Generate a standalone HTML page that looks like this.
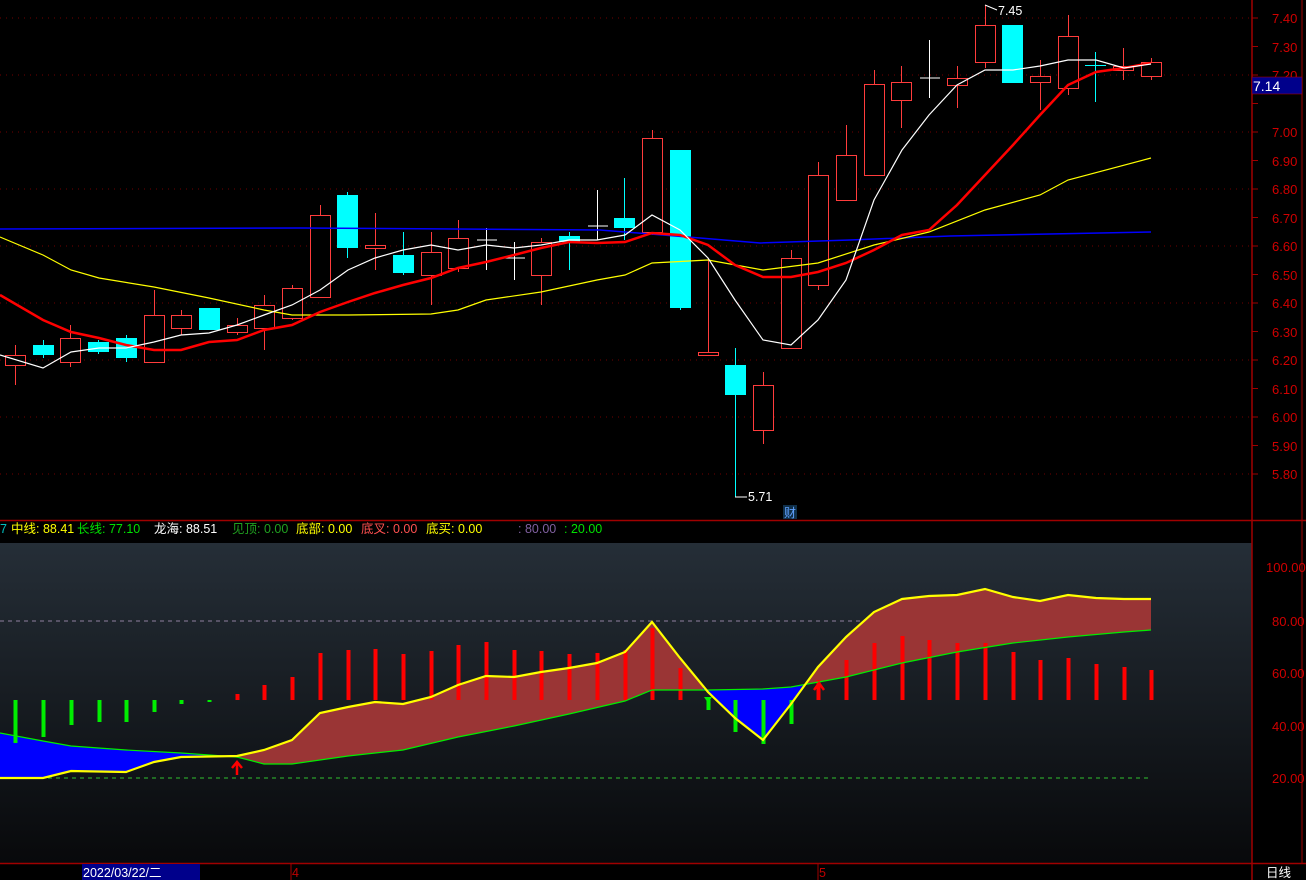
<!DOCTYPE html>
<html><head><meta charset="utf-8"><style>
body{margin:0;background:#000;width:1306px;height:880px;overflow:hidden;font-family:"Liberation Sans","Noto Sans CJK SC",sans-serif}
svg{position:absolute;left:0;top:0}
text{font-family:"Liberation Sans","Noto Sans CJK SC",sans-serif}
</style></head><body>
<svg id="s" width="1306" height="880" xmlns="http://www.w3.org/2000/svg">
<defs>
<linearGradient id="g" x1="0" y1="0" x2="0" y2="1"><stop offset="0" stop-color="#252e37"/><stop offset="1" stop-color="#08090b"/></linearGradient>
<clipPath id="cr"><rect x="215" y="540" width="488" height="330"/><rect x="804" y="540" width="400" height="330"/></clipPath>
<clipPath id="cb"><rect x="0" y="540" width="215" height="330"/><rect x="703" y="540" width="101" height="330"/></clipPath>
</defs>
<rect x="0" y="543" width="1252" height="320" fill="url(#g)"/>
<g id="grid"></g>
<g id="main"></g>
<line x1="1252" y1="0" x2="1252" y2="880" stroke="#a00000" stroke-width="1.5"/>
<line x1="0" y1="520.5" x2="1306" y2="520.5" stroke="#a00000" stroke-width="1.5"/>
<line x1="0" y1="863.5" x2="1306" y2="863.5" stroke="#a00000" stroke-width="1.5"/>
<line x1="1302" y1="0" x2="1302" y2="863" stroke="#a00000" stroke-width="1"/>
<g fill="#d00000" font-size="13">
<text x="1272" y="23">7.40</text><text x="1272" y="52">7.30</text><text x="1272" y="80">7.20</text>
<text x="1272" y="137">7.00</text><text x="1272" y="166">6.90</text><text x="1272" y="194">6.80</text>
<text x="1272" y="223">6.70</text><text x="1272" y="251">6.60</text><text x="1272" y="280">6.50</text>
<text x="1272" y="308">6.40</text><text x="1272" y="337">6.30</text><text x="1272" y="365">6.20</text>
<text x="1272" y="394">6.10</text><text x="1272" y="422">6.00</text><text x="1272" y="451">5.90</text>
<text x="1272" y="479">5.80</text>
<text x="1266" y="572">100.00</text><text x="1272" y="626">80.00</text><text x="1272" y="678">60.00</text>
<text x="1272" y="731">40.00</text><text x="1272" y="783">20.00</text>
</g>
<rect x="1252" y="77" width="50" height="17" fill="#00008b" stroke="#c00000" stroke-width="0.5"/>
<text x="1253" y="91" fill="#fff" font-size="14">7.14</text>
<g font-size="12.5">
<text x="0" y="533" fill="#00c0c0">7</text>
<text x="11" y="533" fill="#ffff00">中线: 88.41</text>
<text x="77" y="533" fill="#00e000">长线: 77.10</text>
<text x="154" y="533" fill="#ffffff">龙海: 88.51</text>
<text x="232" y="533" fill="#20a020">见顶: 0.00</text>
<text x="296" y="533" fill="#ffff00">底部: 0.00</text>
<text x="361" y="533" fill="#ff5050">底叉: 0.00</text>
<text x="426" y="533" fill="#ffff00">底买: 0.00</text>
<text x="518" y="533" fill="#8060a0">: 80.00</text>
<text x="564" y="533" fill="#00e000">: 20.00</text>
</g>
<text x="998" y="15" fill="#fff" font-size="12.5">7.45</text>
<path d="M985 5 L997 10" stroke="#fff" fill="none"/>
<text x="748" y="501" fill="#fff" font-size="12.5">5.71</text>
<path d="M735 497 L747 497" stroke="#fff"/>
<rect x="783" y="505" width="14" height="14" fill="#10304a"/>
<text x="784" y="517" fill="#60a0ff" font-size="12">财</text>
<rect x="82" y="864" width="118" height="16" fill="#00008b"/>
<text x="83" y="877" fill="#fff" font-size="12.5">2022/03/22/二</text>
<text x="292" y="877" fill="#c00000" font-size="12.5">4</text>
<line x1="291" y1="864" x2="291" y2="880" stroke="#a00000"/>
<text x="819" y="877" fill="#c00000" font-size="12.5">5</text>
<line x1="818" y1="864" x2="818" y2="880" stroke="#a00000"/>
<text x="1266" y="877" fill="#fff" font-size="12.5">日线</text>
</svg>
<script>
var S=document.getElementById('main'),G=document.getElementById('grid'),h='',gh='';
for(var p=0;p<=8;p++){var y=18+p*57;gh+='<line x1="0" y1="'+y+'" x2="1252" y2="'+y+'" stroke="#700000" stroke-dasharray="1,5"/>';}
for(var p=0;p<=16;p++){var y=18+p*28.5;gh+='<line x1="1252" y1="'+y+'" x2="1258" y2="'+y+'" stroke="#a00000"/>';}
gh+='<line x1="0" y1="621" x2="1150" y2="621" stroke="#9080a0" stroke-dasharray="4,4"/>';
gh+='<line x1="0" y1="778" x2="1150" y2="778" stroke="#30c030" stroke-dasharray="4,4"/>';
G.innerHTML=gh;
var xs=[];for(var i=0;i<42;i++)xs.push(Math.round(15+i*27.7));
// type,top,bottom,wickTop,wickBot
var c=[['r',355,365,345,385],['c',345,355,340,358],['r',338,362,325,367],['c',342,352,340,354],['c',338,358,335,362],['r',315,362,290,362],['r',315,328,310,335],['c',308,330,308,330],['r',325,332,318,335],['r',305,328,295,350],['r',288,318,285,320],['r',215,297,205,298],['c',195,248,192,258],['r',245,248,213,270],['c',255,273,232,275],['r',252,275,232,305],['r',238,268,220,272],['w',240,241,228,270],['w',258,259,242,280],['r',242,275,238,305],['c',236,242,232,270],['w',226,227,190,240],['c',218,228,178,240],['r',138,232,130,235],['c',150,308,150,310],['r',352,355,258,355],['c',365,395,348,497],['r',385,430,372,444],['r',258,348,250,348],['r',175,285,162,290],['r',155,200,125,200],['r',84,175,70,175],['r',82,100,66,128],['w',78,79,40,98],['r',78,85,66,108],['r',25,62,5,68],['c',25,83,25,83],['r',76,82,60,110],['r',36,88,15,95],['c',65,66,52,102],['r',66,70,48,80],['r',62,76,58,80]];
c.forEach(function(k,i){var x=xs[i],col=k[0]=='r'?'#ff3c3c':k[0]=='c'?'#00ffff':'#ffffff';
h+='<line x1="'+(x+.5)+'" y1="'+k[3]+'" x2="'+(x+.5)+'" y2="'+k[4]+'" stroke="'+col+'"/>';
if(k[0]=='r')h+='<rect x="'+(x-9.5)+'" y="'+(k[1]+.5)+'" width="20" height="'+(k[2]-k[1])+'" fill="#000" stroke="'+col+'"/>';
else if(k[0]=='c')h+='<rect x="'+(x-10)+'" y="'+k[1]+'" width="21" height="'+(k[2]-k[1])+'" fill="'+col+'"/>';
else h+='<line x1="'+(x-9)+'" y1="'+k[1]+'" x2="'+(x+11)+'" y2="'+k[1]+'" stroke="'+col+'"/>';});
function pl(a,col,w){var s='';for(var i=0;i<a.length;i+=2)s+=a[i]+','+a[i+1]+' ';return '<polyline points="'+s+'" fill="none" stroke="'+col+'" stroke-width="'+w+'"/>';}
h+=pl([0,229,300,228,600,230,700,238,760,243,850,240,950,236,1050,234,1151,232],'#0000ff',1.5);
h+=pl([0,237,43,255,71,270,99,278,154,287,209,298,264,310,292,315,348,315,431,314,458,310,486,300,541,292,597,280,625,275,652,263,708,260,763,270,818,263,874,245,929,232,985,210,1040,195,1068,180,1151,158],'#ffff00',1.2);
h+=pl([0,295,43,320,71,332,99,338,126,345,154,350,181,350,209,342,237,340,264,330,292,325,320,312,348,302,375,293,403,285,431,278,458,268,486,262,514,255,541,248,569,242,597,243,625,242,652,233,680,235,708,245,735,265,763,277,791,277,818,272,846,263,874,250,902,235,929,230,957,205,985,175,1013,145,1040,115,1068,85,1096,72,1124,68,1151,63],'#ff0000',2.5);
h+=pl([0,355,43,368,71,352,99,348,126,348,154,342,181,335,209,333,237,325,264,315,292,305,320,290,348,270,375,258,403,250,431,245,458,250,486,245,514,248,541,245,569,240,597,240,625,235,652,215,680,230,708,258,735,300,763,340,791,345,818,320,846,280,874,200,902,150,929,115,957,85,985,70,1013,70,1040,66,1068,60,1096,60,1124,68,1151,64],'#ffffff',1.2);
var Y=[0,778,43,778,71,771,126,772,154,762,181,757,237,756,264,750,292,740,320,713,348,707,375,702,403,704,431,697,458,685,486,676,514,677,541,672,569,668,597,663,625,652,652,622,680,658,708,692,735,718,763,740,791,704,818,667,846,637,874,612,902,599,929,596,957,595,985,589,1013,597,1040,601,1068,595,1096,598,1124,599,1151,599];
var Gr=[0,733,43,741,71,746,126,750,181,753,237,757,264,764,292,764,348,756,403,750,458,737,514,726,569,714,625,701,652,690,708,690,763,689,791,687,846,677,902,663,957,652,1013,643,1068,637,1124,632,1151,630];
var poly='';for(var i=0;i<Y.length;i+=2)poly+=Y[i]+','+Y[i+1]+' ';for(var i=Gr.length-2;i>=0;i-=2)poly+=Gr[i]+','+Gr[i+1]+' ';
h+='<polygon points="'+poly+'" fill="#9a3535" clip-path="url(#cr)"/><polygon points="'+poly+'" fill="#0000ff" clip-path="url(#cb)"/>';
var bars={15:743,43:737,71:725,99:722,126:722,154:712,181:704,209:702,237:694,264:685,292:677,320:653,348:650,375:649,403:654,431:651,458:645,486:642,514:650,541:651,569:654,597:653,625:650,652:628,680:668,708:710,735:732,763:744,791:724,818:680,846:660,874:643,902:636,929:640,957:643,985:643,1013:652,1040:660,1068:658,1096:664,1124:667,1151:670};
for(var k in bars){var y=bars[k],x=+k;if(y>700)h+='<rect x="'+(x-1.5)+'" y="700" width="4" height="'+(y-700)+'" fill="#00ee00"/>';else h+='<rect x="'+(x-1.5)+'" y="'+y+'" width="4" height="'+(700-y)+'" fill="#ff0000"/>';}
h+=pl(Gr,'#00ee00',1.2)+pl(Y,'#ffff00',2.2);
h+='<path d="M237 775 V764 M232 768 L237 762 L242 768" stroke="#ff0000" stroke-width="2.5" fill="none"/>';
h+='<path d="M819 700 V686 M814 690 L819 683 L824 690" stroke="#ff0000" stroke-width="2.5" fill="none"/>';
h+='<path d="M704 697 L712 697 L708 703 Z" fill="#00ee00"/>';
S.innerHTML=h;
</script>
</body></html>
